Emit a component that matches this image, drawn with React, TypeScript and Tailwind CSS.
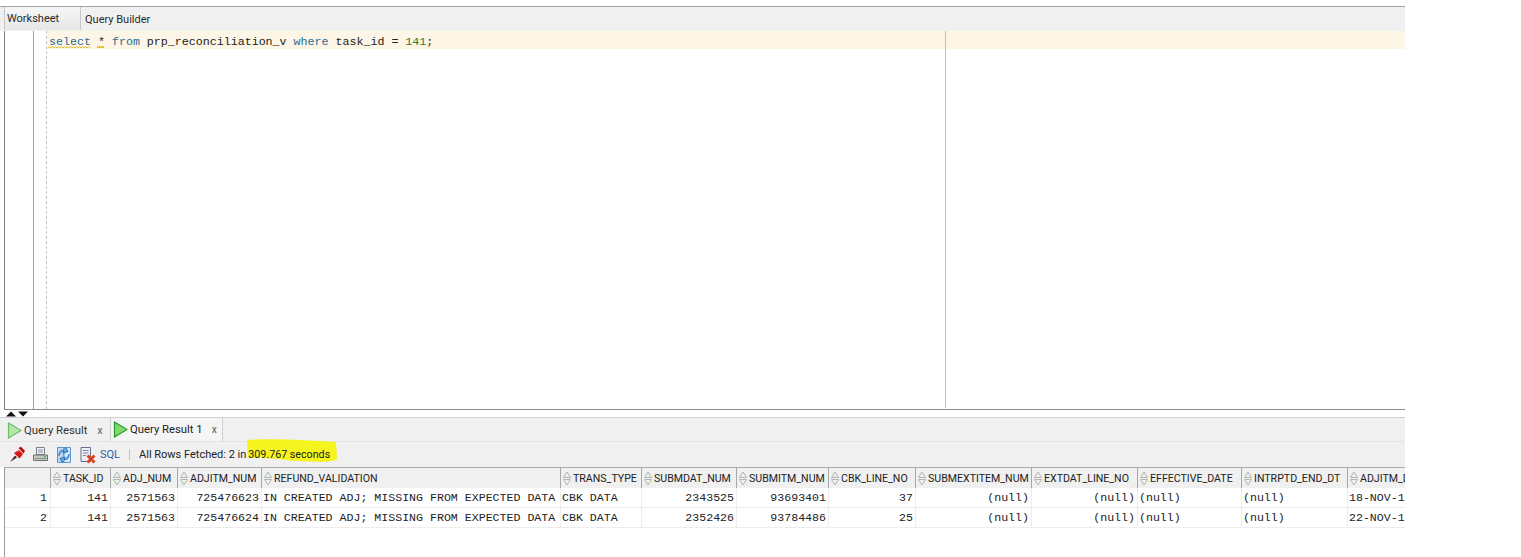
const ui = "font-['Roboto','Liberation_Sans',sans-serif]";
const mono = "font-['Liberation_Mono','Courier_New',monospace]";

const columns = [
  { name: "TASK_ID", width: "w-[60px]" },
  { name: "ADJ_NUM", width: "w-[67px]" },
  { name: "ADJITM_NUM", width: "w-[84px]" },
  { name: "REFUND_VALIDATION", width: "w-[299px]" },
  { name: "TRANS_TYPE", width: "w-[81px]" },
  { name: "SUBMDAT_NUM", width: "w-[95px]" },
  { name: "SUBMITM_NUM", width: "w-[92px]" },
  { name: "CBK_LINE_NO", width: "w-[87px]" },
  { name: "SUBMEXTITEM_NUM", width: "w-[116px]" },
  { name: "EXTDAT_LINE_NO", width: "w-[106px]" },
  { name: "EFFECTIVE_DATE", width: "w-[104px]" },
  { name: "INTRPTD_END_DT", width: "w-[106px]" },
  { name: "ADJITM_DATE", width: "w-[58px]" },
];

const rows: [string, boolean][][] = [
  [["141", true], ["2571563", true], ["725476623", true], ["IN CREATED ADJ; MISSING FROM EXPECTED DATA", false], ["CBK DATA", false], ["2343525", true], ["93693401", true], ["37", true], ["(null)", true], ["(null)", true], ["(null)", false], ["(null)", false], ["18-NOV-13", false]],
  [["141", true], ["2571563", true], ["725476624", true], ["IN CREATED ADJ; MISSING FROM EXPECTED DATA", false], ["CBK DATA", false], ["2352426", true], ["93784486", true], ["25", true], ["(null)", true], ["(null)", true], ["(null)", false], ["(null)", false], ["22-NOV-13", false]],
];

function SortIcon() {
  return (
    <svg width="8" height="15" viewBox="0 0 8 15" className="shrink-0">
      <path d="M4 1 L7.5 6.5 H0.5 Z" fill="#eef0ee" stroke="#b0b4b0" />
      <path d="M4 14 L7.5 8.5 H0.5 Z" fill="#eef0ee" stroke="#b0b4b0" />
    </svg>
  );
}

function Play({ bright }: { bright?: boolean }) {
  return (
    <svg width="15" height="17" viewBox="0 0 15 17" className="shrink-0">
      <path
        d="M1.5 1 L14 8.5 L1.5 16 Z"
        fill={bright ? "#7fdc6a" : "#b6e6a8"}
        stroke={bright ? "#2b9a2b" : "#6dbb6d"}
        strokeWidth="1.2"
      />
    </svg>
  );
}

function Pin() {
  return (
    <svg width="17" height="17" viewBox="0 0 17 17" className="shrink-0">
      <path d="M1 16 L6 9.5 L8 11.5 Z" fill="#4a2020" />
      <path d="M5 7 L10 4 L14 8 L10.5 12.5 Z" fill="#d81414" />
      <path d="M9.5 2 L12 0.8 L16 5 L14.5 7.5 Z" fill="#b80c0c" />
      <path d="M9 5.5 L11 4.5 L12 5.5" stroke="#f58a8a" fill="none" />
    </svg>
  );
}

function Printer() {
  return (
    <svg width="17" height="17" viewBox="0 0 17 17" className="shrink-0">
      <path d="M4.5 1.5 H12.5 V8.5 H4.5 Z" fill="#eef1f6" stroke="#7a7f8a" />
      <path d="M6 4 H11 M6 6 H11" stroke="#8a90a0" />
      <path d="M1.5 9 H15.5 V14.5 H1.5 Z" fill="#c5c7c4" stroke="#6f736f" />
      <path d="M3 12.5 H14" stroke="#8b8f8b" />
      <circle cx="13" cy="11" r="0.9" fill="#4cae4c" />
    </svg>
  );
}

function Refresh() {
  return (
    <svg width="18" height="18" viewBox="0 0 18 18" className="shrink-0">
      <path d="M2.5 1.5 H9 V16.5 H2.5 Z" fill="#bcd7ee" stroke="#5d97cf" />
      <path d="M9 1.5 H15.5 V16.5 H9 Z" fill="#d8e8f6" stroke="#5d97cf" />
      <path d="M4 10 C3.5 6 6 4 9 4.5 L8 7 L13 5.5 L10.5 1.5 L9.8 3" fill="#6eaae0" stroke="#1d6fc0" strokeWidth="1" />
      <path d="M14 8 C14.5 12 12 14 9 13.5 L10 11 L5 12.5 L7.5 16.5 L8.2 15" fill="#6eaae0" stroke="#1d6fc0" strokeWidth="1" />
    </svg>
  );
}

function ClearDoc() {
  return (
    <svg width="18" height="18" viewBox="0 0 18 18" className="shrink-0">
      <path d="M2 1.5 H11.5 V15.5 H2 Z" fill="#eceef4" stroke="#66708a" />
      <path d="M4 4.5 H9.5 M4 7 H9.5 M4 9.5 H7" stroke="#7b86a5" />
      <path d="M8.5 9.5 L15.5 16.5 M15.5 9.5 L8.5 16.5" stroke="#d9401c" strokeWidth="2.8" />
    </svg>
  );
}

function Squiggle({ className }: { className: string }) {
  return (
    <svg height="3" viewBox="0 0 42 3" preserveAspectRatio="none" className={className}>
      <path
        d="M0 2 L1.5 0.5 L3 2 L4.5 0.5 L6 2 L7.5 0.5 L9 2 L10.5 0.5 L12 2 L13.5 0.5 L15 2 L16.5 0.5 L18 2 L19.5 0.5 L21 2 L22.5 0.5 L24 2 L25.5 0.5 L27 2 L28.5 0.5 L30 2 L31.5 0.5 L33 2 L34.5 0.5 L36 2 L37.5 0.5 L39 2 L40.5 0.5 L42 2"
        fill="none"
        stroke="#e3b92f"
      />
    </svg>
  );
}

export default function App() {
  return (
    <div className="h-[557px] w-[1521px] overflow-hidden bg-white pt-[6px]">
      <div className="w-[1405px] overflow-hidden">
        {/* Worksheet tabs */}
        <div className={`flex h-[25px] border-t border-[#a3a3a3] bg-[#f0f0f0] pl-[4px] text-[11px] text-[#2b2b2b] ${ui}`}>
          <div className="flex h-[23px] w-[77px] items-center border-x border-[#c9c9c9] bg-gradient-to-b from-[#f7f7f7] to-[#e6e6e6] pl-[2px] pt-[1px]">
            Worksheet
          </div>
          <div className="flex h-[24px] items-center pl-[4px] pt-[3px]">Query Builder</div>
        </div>

        <div className="pl-[4px]">
          {/* Editor */}
          <div className="flex h-[379px] border-b border-l border-b-[#8a8a8a] border-l-[#7d7d7d] bg-white">
            <div className="w-[29px] shrink-0 border-r border-[#a0a0a0]" />
            <div className="w-[12px] shrink-0" />
            <div className="min-w-0 flex-1 border-l border-dashed border-[#c4c4c4]">
              <div className="relative h-[18px] bg-[#fdf6e6]">
                <div className={`pl-[2px] pt-[3px] text-[11.65px] leading-[15px] whitespace-pre text-[#222] ${mono}`}>
                  <span className="text-[#2a6a96]">select</span> <span>*</span>{" "}
                  <span className="text-[#2a6a96]">from</span> prp_reconciliation_v{" "}
                  <span className="text-[#2a6a96]">where</span> task_id = <span className="text-[#2c7a2c]">141</span>;
                </div>
                <Squiggle className="absolute left-[1px] top-[15px] w-[42px]" />
                <Squiggle className="absolute left-[50px] top-[15px] w-[7px]" />
                <div className="absolute left-[898px] top-0 h-[377px] w-px bg-[#c2c2c2]" />
              </div>
            </div>
          </div>
        </div>

        {/* Splitter */}
        <div className="flex h-[8px] items-start border-b border-[#d0d0d0] pl-[5px] pt-[1px]">
          <svg width="26" height="6" viewBox="0 0 26 6">
            <path d="M1 5.5 L6 0.5 L11 5.5 Z" fill="#111" />
            <path d="M13 0.5 H23 L18 5.5 Z" fill="#111" />
          </svg>
        </div>

        {/* Result tabs */}
        <div className={`flex h-[24px] items-end border-b border-[#e3e3e3] bg-[#f0f0f0] pl-[7px] text-[11.3px] text-[#333] ${ui}`}>
          <div className="flex h-[22px] w-[103px] items-center gap-[2px]">
            <Play />
            <span className="pt-[3px]">Query Result</span>
            <span className="ml-[8px] pt-[1px] text-[10px] font-medium text-[#777]">x</span>
          </div>
          <div className="flex h-[24px] w-[113px] items-center gap-[2px] border-x border-t border-[#d0d0d0] bg-[#f5f5f5] pl-[2px] text-[#222]">
            <Play bright />
            <span className="pt-[2px]">Query Result 1</span>
            <span className="ml-[7px] text-[10px] font-medium text-[#777]">x</span>
          </div>
        </div>

        {/* Toolbar */}
        <div className={`flex h-[25px] items-center bg-[#f0f0f0] pl-[9px] text-[11px] text-[#222] ${ui}`}>
          <div className="flex w-[90px] items-center gap-[6px]">
            <Pin />
            <Printer />
            <Refresh />
            <ClearDoc />
          </div>
          <span className="ml-[1px] pt-[1px] text-[#2c5ea8]">SQL</span>
          <span className="mx-[9px] h-[11px] w-px bg-[#c4c4c4]" />
          <span className="pt-[1px]">All Rows Fetched: 2 in</span>
          <span className="relative ml-[2px] pt-[1px] text-[10.7px]">
            <svg width="92" height="26" viewBox="0 0 92 26" className="absolute -left-[2px] -top-[9px]">
              <path d="M1 3 C30 1 60 3 90 5 L91 22 C88 26 60 25 40 23 C25 21 10 21 2 21 Z" fill="#f5f41e" />
            </svg>
            <span className="relative">309.767 seconds</span>
          </span>
        </div>

        <div className="pl-[4px]">
          {/* Table */}
          <div className="h-[90px] border-t border-l border-t-[#a9a9a9] border-l-[#9a9a9a]">
            <div className={`flex h-[20px] text-[10.6px] text-[#222] ${ui}`}>
              <div className="w-[45px] shrink-0 bg-[#f0f0f0]" />
              {columns.map((c) => (
                <div
                  key={c.name}
                  className={`flex shrink-0 items-center gap-[2px] overflow-hidden whitespace-nowrap border-l border-[#a8a8a8] bg-[#f0f0f0] pl-[2px] ${c.width}`}
                >
                  <SortIcon />
                  <span className="pt-[2px]">{c.name}</span>
                </div>
              ))}
            </div>
            {rows.map((row, i) => (
              <div key={i} className={`flex h-[20px] text-[11.6px] text-[#222] ${mono}`}>
                <div className="flex w-[45px] shrink-0 items-center justify-end border-b border-[#ededed] pr-[3px] pt-[1px]">
                  {i + 1}
                </div>
                {row.map(([value, right], j) => (
                  <div
                    key={j}
                    className={`flex shrink-0 items-center overflow-hidden whitespace-pre border-b border-l border-[#ededed] pt-[1px] ${columns[j].width} ${right ? "justify-end pr-[2px]" : "justify-start pl-[1px]"}`}
                  >
                    {value}
                  </div>
                ))}
              </div>
            ))}
          </div>
        </div>
      </div>
    </div>
  );
}
